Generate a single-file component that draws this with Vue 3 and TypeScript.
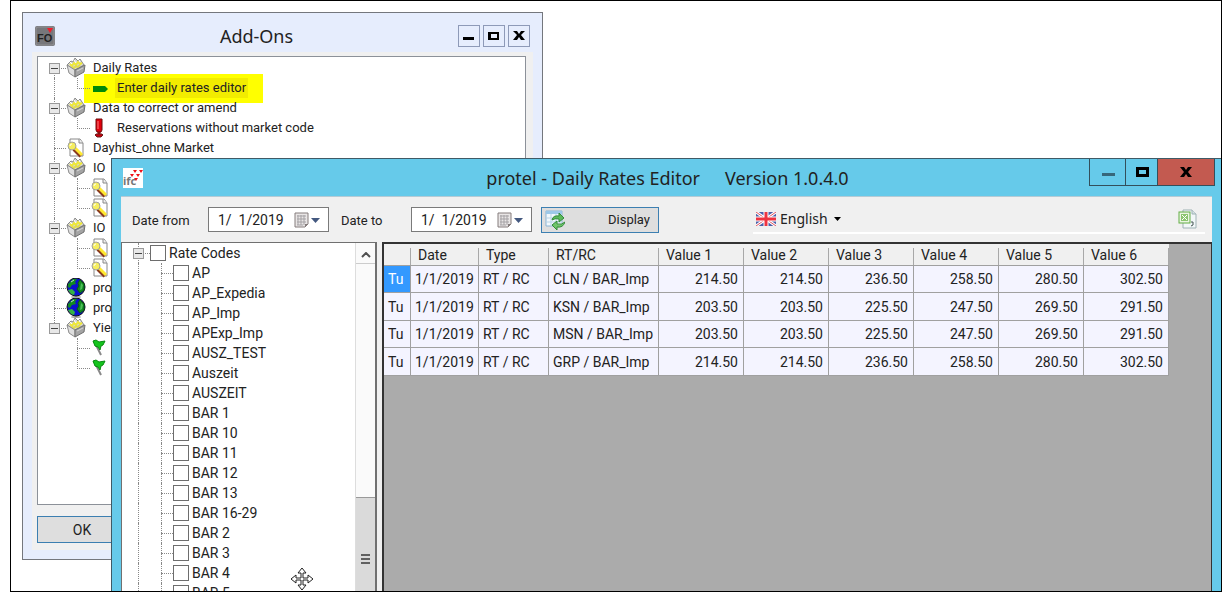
<script setup lang="ts">
interface AddOn {
  level: 0 | 1
  icon: string
  label: string
  group?: boolean
  edge?: 'first' | 'last'
  rootLine?: boolean
  active?: boolean
}

interface Rate {
  day: string
  date: string
  type: string
  code: string
  values: string[]
}

const addOns: AddOn[] = [
  { level: 0, icon: 'box', label: 'Daily Rates', group: true, edge: 'first' },
  { level: 1, icon: 'arrow', label: 'Enter daily rates editor', edge: 'last', rootLine: true, active: true },
  { level: 0, icon: 'box', label: 'Data to correct or amend', group: true },
  { level: 1, icon: 'alert', label: 'Reservations without market code', edge: 'last', rootLine: true },
  { level: 0, icon: 'search', label: 'Dayhist_ohne Market' },
  { level: 0, icon: 'box', label: 'IO', group: true },
  { level: 1, icon: 'search', label: '', rootLine: true },
  { level: 1, icon: 'search', label: '', edge: 'last', rootLine: true },
  { level: 0, icon: 'box', label: 'IO', group: true },
  { level: 1, icon: 'search', label: '', rootLine: true },
  { level: 1, icon: 'search', label: '', edge: 'last', rootLine: true },
  { level: 0, icon: 'globe', label: 'pro' },
  { level: 0, icon: 'globe', label: 'pro' },
  { level: 0, icon: 'box', label: 'Yie', group: true, edge: 'last' },
  { level: 1, icon: 'flag', label: '' },
  { level: 1, icon: 'flag', label: '', edge: 'last' },
]

const rateCodes: string[] = [
  'AP', 'AP_Expedia', 'AP_Imp', 'APExp_Imp', 'AUSZ_TEST', 'Auszeit', 'AUSZEIT',
  'BAR 1', 'BAR 10', 'BAR 11', 'BAR 12', 'BAR 13', 'BAR 16-29', 'BAR 2', 'BAR 3', 'BAR 4', 'BAR 5',
]

const high = ['214.50', '214.50', '236.50', '258.50', '280.50', '302.50']
const low = ['203.50', '203.50', '225.50', '247.50', '269.50', '291.50']
const rates: Rate[] = [
  { day: 'Tu', date: '1/1/2019', type: 'RT / RC', code: 'CLN / BAR_Imp', values: high },
  { day: 'Tu', date: '1/1/2019', type: 'RT / RC', code: 'KSN / BAR_Imp', values: low },
  { day: 'Tu', date: '1/1/2019', type: 'RT / RC', code: 'MSN / BAR_Imp', values: low },
  { day: 'Tu', date: '1/1/2019', type: 'RT / RC', code: 'GRP / BAR_Imp', values: high },
]

const dates = [
  { id: 'date-from', label: 'Date from' },
  { id: 'date-to', label: 'Date to' },
]
</script>

<template>
  <svg class="defs" aria-hidden="true">
    <symbol id="i-box" viewBox="0 0 20 20">
      <path d="M1 7 L5 3 L7 4 L9 0 L12 3 L14 1 L18 7 L9 12 Z" fill="#d9d9d4" stroke="#8a8a8a" stroke-width="1" />
      <path d="M4 6 L6 8 L8 5 L10 7 L12 4 L14 6 L16 5" fill="none" stroke="#efe936" stroke-width="2" />
      <path d="M6 9 L8 10 L10 8 L12 9 L14 7" fill="none" stroke="#e2dc4a" stroke-width="2" />
      <path d="M4 4 L6 6 M8 2 L10 5 M13 2 L14 4" stroke="#fff" stroke-width="1" />
      <path d="M1 7 L9 12 V19 L3 15 Z" fill="#dedede" stroke="#8c8c8c" stroke-width="1" />
      <path d="M9 12 L19 7 L18 14 L9 19 Z" fill="#a4a4a4" stroke="#707070" stroke-width="1" />
      <path d="M11 13 L17 10" stroke="#d6d6d6" stroke-width="1" />
    </symbol>
    <symbol id="i-arrow" viewBox="0 0 20 20">
      <path d="M3 8 H15 L18 11 L15 14 H3 Z" fill="#008a08" />
    </symbol>
    <symbol id="i-alert" viewBox="0 0 20 20">
      <path d="M6 1 H12 V12 L11 14 H7 L6 12 Z" fill="#e0000c" stroke="#6e0a0a" />
      <path d="M8 3 V11" stroke="#ff8080" stroke-width="1" />
      <path d="M9 14 V16" stroke="#8a1010" stroke-width="3" />
      <path d="M6 16 H12 L13 17 L11 19 H7 L5 17 Z" fill="#c8000c" stroke="#6a2020" stroke-width="1" />
    </symbol>
    <symbol id="i-search" viewBox="0 0 20 20">
      <path d="M4 1 H14 L17 5 V18 H4 Z" fill="#fff" stroke="#888" />
      <path d="M13 1 V5 H17" fill="#eee" stroke="#888" />
      <path d="M8 11 L15 18" stroke="#8a3b1e" stroke-width="4" />
      <path d="M9 10 L16 17" stroke="#ffe930" stroke-width="3" />
      <circle cx="6" cy="8" r="4" fill="#f5ee60" stroke="#a0a0a0" />
      <path d="M4 8 Q4 6 6 6" stroke="#fff" fill="none" />
    </symbol>
    <symbol id="i-globe" viewBox="0 0 20 20">
      <ellipse cx="10" cy="19" rx="5" ry="1" fill="#aaa" />
      <circle cx="10" cy="9" r="9" fill="#0a10d0" stroke="#111" stroke-width="1" />
      <path d="M2 6 L7 1 L11 1 L9 4 L10 6 L6 7 L4 10 L2 9 Z" fill="#128a22" />
      <path d="M14 2 L18 6 L18 12 L14 15 L11 11 L13 8 L12 5 Z" fill="#128a22" stroke="#065c10" />
      <path d="M15 5 L17 7 L16 11 L14 12 Z" fill="#4cc05a" />
      <path d="M2 12 L6 11 L9 14 L8 17 L5 16 Z" fill="#35b544" />
      <path d="M5 4 L8 2" stroke="#b8ecb8" />
    </symbol>
    <symbol id="i-flag" viewBox="0 0 20 20">
      <path d="M4 3 L11 17" stroke="#888" stroke-width="2" />
      <path d="M3 3 L6 2 L9 4 L15 3 L13 7 L11 8 L10 12 L8 9 L5 8 Z" fill="#14c41c" stroke="#078a10" stroke-width="1" />
    </symbol>
  </svg>

  <main class="page">
    <div class="desktop">
      <section class="window addons">
        <header class="addons-title">
          <svg class="logo" viewBox="0 0 20 20" aria-hidden="true">
            <rect width="20" height="20" rx="2" fill="#77777b" />
            <rect x="1" y="1" width="18" height="18" rx="2" fill="none" stroke="#929295" />
            <text x="2" y="16" class="logo-fo">FO</text>
            <path d="M12 2 H18 L15 7 Z" fill="#f01d2b" />
          </svg>
          <h1>Add-Ons</h1>
          <div class="frame-buttons">
            <button type="button" aria-label="Minimize"><svg viewBox="0 0 20 20"><path d="M4 11 H15 V14 H4 Z" /></svg></button>
            <button type="button" aria-label="Maximize"><svg viewBox="0 0 20 20"><path fill-rule="evenodd" d="M4 6 H15 V14 H4 Z M7 8 V12 H13 V8 Z" /></svg></button>
            <button type="button" aria-label="Close"><svg viewBox="0 0 20 20"><path d="M4 5 H8 L10 8 L12 5 H16 L12 9 L16 14 H12 L10 11 L8 14 H4 L8 9 Z" /></svg></button>
          </div>
        </header>
        <div class="addons-body">
          <ul class="tree addons-tree">
            <li v-for="(item, i) in addOns" :key="i" class="node" :class="{ active: item.active }">
              <template v-if="item.level === 0">
                <span class="guide root line across" :class="item.edge">
                  <span v-if="item.group" class="expander"></span>
                </span>
              </template>
              <template v-else>
                <span class="guide root" :class="{ line: item.rootLine }"></span>
                <span class="guide child line across" :class="item.edge"></span>
              </template>
              <svg class="icon" aria-hidden="true"><use :href="'#i-' + item.icon" /></svg>
              <span class="label">{{ item.label }}</span>
            </li>
          </ul>
          <button type="button" class="button ok">OK</button>
        </div>
      </section>

      <section class="window editor">
        <header class="editor-title">
          <svg class="logo" viewBox="0 0 20 20" aria-hidden="true">
            <rect width="20" height="20" fill="#fff" />
            <text x="0" y="17" class="logo-ifc">ifc</text>
            <path d="M10 2 H14 L12 5 Z M16 2 H20 L18 5 Z M7 6 H11 L9 9 Z M13 6 H17 L15 9 Z M11 10 H15 L13 13 Z" fill="#f01018" />
          </svg>
          <h2><span>protel - Daily Rates Editor</span><span>Version 1.0.4.0</span></h2>
          <div class="caption-buttons">
            <button type="button" class="min" aria-label="Minimize"><svg viewBox="0 0 20 20"><path d="M4 11 H17 V14 H4 Z" fill="#37677a" /></svg></button>
            <button type="button" class="max" aria-label="Maximize"><svg viewBox="0 0 20 20"><path fill-rule="evenodd" d="M4 5 H17 V15 H4 Z M7 8 V12 H14 V8 Z" /></svg></button>
            <button type="button" class="close" aria-label="Close"><svg viewBox="0 0 20 20"><path d="M4 5 H8 L10 8 L12 5 H16 L12 10 L16 15 H12 L10 12 L8 15 H4 L8 10 Z" /></svg></button>
          </div>
        </header>

        <div class="editor-body">
          <div class="toolbar">
            <div v-for="d in dates" :key="d.id" class="field" :class="d.id">
              <label :for="d.id">{{ d.label }}</label>
              <div class="date-box">
                <input :id="d.id" type="text" value="1/  1/2019" />
                <button type="button" aria-label="Open calendar">
                  <svg viewBox="0 0 26 16" width="26" height="16">
                    <path d="M1 1 H14 V12 L11 15 H1 Z" fill="#e9e6e6" stroke="#857d7d" />
                    <path d="M3 4 H12 M3 7 H12 M3 10 H12 M3 13 H9 M4 3 V13 M7 3 V13 M10 3 V13" stroke="#a5a2a5" fill="none" />
                    <path d="M11 15 V12 H14 Z" fill="#857d7d" />
                    <path d="M17 6 H26 L21.5 11 Z" fill="#43587f" />
                  </svg>
                </button>
              </div>
            </div>
            <button type="button" class="button display">
              <svg viewBox="0 0 20 20" width="20" height="20" aria-hidden="true">
                <path d="M1 1 H17 V16 H1 Z" fill="#f2f8fc" stroke="#8bb5d5" />
                <path d="M1 1 H17 V4 H1 Z" fill="#9cc8e8" />
                <path d="M1 8 H17 M1 12 H17 M6 4 V16 M11 4 V16" stroke="#b8d3e6" fill="none" />
                <path d="M7 10 Q8 5 14 6 V3 L19 8 L14 12 V9 Q10 8 7 10 Z" fill="#5cb95b" stroke="#338b3a" />
                <path d="M20 12 Q18 18 12 17 V20 L7 15 L12 11 V14 Q17 15 20 12 Z" fill="#6fc56a" stroke="#338b3a" />
              </svg>
              <span>Display</span>
            </button>
            <div class="strip">
              <svg viewBox="0 0 20 14" width="20" height="14" aria-hidden="true">
                <rect width="20" height="14" fill="#4b5fa8" />
                <path d="M0 0 L20 14 M20 0 L0 14" stroke="#fff" stroke-width="3" />
                <path d="M0 0 L20 14 M20 0 L0 14" stroke="#e25560" stroke-width="1" />
                <path d="M10 0 V14 M0 7 H20" stroke="#fff" stroke-width="5" />
                <path d="M10 0 V14 M0 7 H20" stroke="#ee3340" stroke-width="3" />
              </svg>
              <select aria-label="Language"><option>English</option></select>
              <svg class="caret" viewBox="0 0 7 4" width="7" height="4" aria-hidden="true"><path d="M0 0 H7 L3.5 4 Z" /></svg>
              <button type="button" class="export" aria-label="Export to Excel">
                <svg viewBox="0 0 20 20" width="20" height="20">
                  <path d="M5 1 H14 L18 5 V19 H5 Z" fill="#f2f7f8" stroke="#9fb2b5" />
                  <path d="M14 1 V5 H18" fill="#d6e2e5" stroke="#9fb2b5" />
                  <rect x="1" y="3" width="11" height="11" fill="#eaf5e2" stroke="#63ad45" stroke-width="1" />
                  <rect x="3" y="5" width="7" height="7" fill="#8cc570" />
                  <path d="M4 6 L9 11 M9 6 L4 11" stroke="#fff" stroke-width="1" />
                  <path d="M13 13 H15 V16 L13 17" fill="none" stroke="#455" />
                </svg>
              </button>
            </div>
          </div>

          <div class="panes">
            <div class="codes">
              <ul class="tree codes-tree">
                <li class="node">
                  <span class="guide root line across"><span class="expander"></span></span>
                  <label class="check"><input type="checkbox" />Rate Codes</label>
                </li>
                <li v-for="code in rateCodes" :key="code" class="node">
                  <span class="guide root line"></span>
                  <span class="guide child line across"></span>
                  <label class="check"><input type="checkbox" />{{ code }}</label>
                </li>
              </ul>
              <div class="scrollbar">
                <button type="button" aria-label="Scroll up"><svg viewBox="0 0 10 6" width="10" height="6"><path d="M1 5 L5 1 L9 5" fill="none" stroke="#505050" stroke-width="2" /></svg></button>
                <div class="track"></div>
                <div class="thumb"><svg viewBox="0 0 9 11" width="9" height="11"><path d="M0 1 H9 M0 5 H9 M0 9 H9" stroke="#606060" stroke-width="2" /></svg></div>
              </div>
            </div>

            <div class="grid">
              <table>
                <colgroup>
                  <col class="c-day" /><col class="c-date" /><col class="c-type" /><col class="c-code" />
                  <col v-for="n in 6" :key="n" class="c-value" />
                </colgroup>
                <thead>
                  <tr>
                    <th></th><th>Date</th><th>Type</th><th>RT/RC</th>
                    <th v-for="n in 6" :key="n">Value {{ n }}</th>
                  </tr>
                </thead>
                <tbody>
                  <tr v-for="(r, i) in rates" :key="r.code">
                    <td class="day" :class="{ selected: i === 0 }">{{ r.day }}</td>
                    <td>{{ r.date }}</td>
                    <td>{{ r.type }}</td>
                    <td>{{ r.code }}</td>
                    <td v-for="(v, k) in r.values" :key="k" class="num">{{ v }}</td>
                  </tr>
                </tbody>
              </table>
            </div>
          </div>
        </div>
      </section>

      <svg class="pointer" viewBox="0 0 24 24" aria-hidden="true">
        <path d="M12 1 L16 6 H13 V11 H18 V8 L23 12 L18 16 V13 H13 V18 H16 L12 23 L8 18 H11 V13 H6 V16 L1 12 L6 8 V11 H11 V6 H8 Z" fill="#fff" stroke="#222" />
      </svg>
    </div>
  </main>
</template>

<style>
body {
  background: #fff;
}
</style>

<style scoped>
* {
  box-sizing: border-box;
}

.defs {
  position: absolute;
  width: 0;
  height: 0;
}

.page {
  height: 100vh;
  padding: 0 8px 4px 10px;
  font: 14px/20px Roboto, "Liberation Sans", sans-serif;
  color: #222;
}

.desktop {
  position: relative;
  height: 100%;
  overflow: hidden;
  border: 1px solid #000;
  background: #fff;
}

button,
input,
select {
  font: inherit;
  color: inherit;
  margin: 0;
  padding: 0;
  border: 0;
  border-radius: 0;
  background: none;
}

h1,
h2 {
  margin: 0;
  font: 18px/24px "Noto Sans", "Open Sans", sans-serif;
  text-align: center;
  white-space: nowrap;
}

.window {
  position: absolute;
  display: flex;
  flex-direction: column;
}

.logo {
  width: 20px;
  height: 20px;
}

.logo-fo {
  font: bold 11px "Liberation Sans", sans-serif;
  fill: #222;
}

.logo-ifc {
  font: bold 11px "Noto Sans", sans-serif;
  fill: #777;
}

.addons {
  left: 11px;
  top: 11px;
  width: 521px;
  height: 548px;
  padding: 0 9px 9px;
  border: 1px solid #74777d;
  background: #e6edfd;
}

.addons-title {
  display: flex;
  align-items: center;
  height: 39px;
  padding: 6px 3px 0 3px;
}

.addons-title h1 {
  flex: 1;
}

.frame-buttons {
  display: flex;
  gap: 3px;
}

.frame-buttons button {
  width: 22px;
  height: 22px;
  border: 1px solid #8e9ab8;
}

.frame-buttons svg {
  display: block;
}

.addons-body {
  flex: 1;
  display: flex;
  flex-direction: column;
  gap: 11px;
  padding: 4px 7px 7px 5px;
  background: #f0f0f0;
}

.tree {
  position: relative;
  z-index: 0;
  flex: 1;
  margin: 0;
  padding: 0;
  list-style: none;
  background: #fff;
  overflow: hidden;
}

.addons-tree {
  padding-top: 1px;
  border: 1px solid #8c9199;
  font-size: 13px;
}

.node {
  position: relative;
  display: flex;
  height: 20px;
  white-space: nowrap;
}

.guide {
  --x: 16px;
  position: relative;
  flex: none;
  width: 28px;
  height: 20px;
}

.guide.child {
  --x: 11px;
  width: 24px;
}

.guide.line::before {
  content: "";
  position: absolute;
  left: var(--x);
  top: 0;
  bottom: 0;
  border-left: 1px dotted #888;
}

.guide.first::before {
  top: 10px;
}

.guide.last::before {
  bottom: 9px;
}

.guide.across::after {
  content: "";
  position: absolute;
  left: var(--x);
  right: 0;
  top: 10px;
  border-top: 1px dotted #888;
}

.expander {
  position: absolute;
  z-index: 1;
  left: calc(var(--x) - 5px);
  top: 5px;
  width: 11px;
  height: 11px;
  border: 1px solid #999;
  background: linear-gradient(#444, #444) center / 7px 1px no-repeat #e8e8e8;
}

.icon {
  flex: none;
  width: 20px;
  height: 20px;
}

.addons-tree .label {
  margin-left: 5px;
  padding: 0 2px;
}

.active::before {
  content: "";
  position: absolute;
  z-index: -1;
  left: 46px;
  top: -4px;
  width: 179px;
  height: 29px;
  background: #ff0;
}

.active .label {
  background: #f2ec00;
}

.button {
  border: 1px solid #3c7fb1;
  background: #dedede;
}

.ok {
  width: 90px;
  height: 27px;
}

.editor {
  left: 100px;
  top: 157px;
  right: 0;
  bottom: 0;
  padding: 0 9px;
  border: solid #3f5a66;
  border-width: 1px 0 0 1px;
  background: #66caea;
}

.editor-title {
  display: grid;
  grid-template-columns: 1fr auto 1fr;
  align-items: center;
  height: 37px;
  padding-left: 2px;
}

.editor-title h2 span + span {
  margin-left: 25px;
}

.caption-buttons {
  display: flex;
  justify-self: end;
  align-self: start;
  margin-right: -3px;
  border: solid #334f5b;
  border-width: 0 1px 1px;
}

.caption-buttons button {
  display: flex;
  align-items: center;
  justify-content: center;
  height: 26px;
}

.caption-buttons svg {
  width: 20px;
  height: 20px;
}

.min {
  width: 35px;
}

.caption-buttons .max {
  width: 33px;
  border: solid #334f5b;
  border-width: 0 1px;
}

.caption-buttons .close {
  width: 56px;
  background: #c35a50;
}

.editor-body {
  flex: 1;
  display: flex;
  flex-direction: column;
  min-height: 0;
  background: #f0f0f0;
}

.toolbar {
  display: flex;
  align-items: center;
  height: 46px;
  padding: 0 7px 0 11px;
  border-top: 1px solid #b4cbd6;
}

.field {
  display: flex;
  align-items: center;
}

.field label {
  width: 76px;
  padding-top: 3px;
  font-size: 13px;
}

.date-to {
  margin-left: 12px;
}

.date-to label {
  width: 70px;
}

.date-box {
  display: flex;
  align-items: center;
  width: 121px;
  height: 25px;
  padding: 0 8px 0 9px;
  border: 1px solid #7a7a7a;
  background: #fff;
}

.date-box input {
  flex: 1;
  min-width: 0;
  white-space: pre;
}

.date-box svg {
  display: block;
}

.display {
  display: flex;
  align-items: center;
  justify-content: space-between;
  width: 118px;
  height: 26px;
  margin-left: 9px;
  padding: 0 8px 0 3px;
  font-size: 13px;
}

.strip {
  flex: 1;
  display: flex;
  align-items: center;
  height: 28px;
  margin-left: 94px;
  padding: 0 7px 0 3px;
  border-bottom: 2px solid #fff;
}

.strip select {
  appearance: none;
  margin-left: 4px;
  font-family: "Noto Sans", "Open Sans", sans-serif;
}

.caret {
  margin-left: 6px;
}

.export {
  margin-left: auto;
}

.export svg {
  display: block;
}

.panes {
  flex: 1;
  display: flex;
  gap: 5px;
  min-height: 0;
}

.codes {
  display: flex;
  width: 256px;
  border: solid #707070;
  border-width: 1px 2px 0 1px;
  overflow: hidden;
}

.codes-tree .guide.child {
  width: 23px;
}

.check {
  display: flex;
  align-items: center;
  gap: 3px;
}

.check input {
  appearance: none;
  width: 16px;
  height: 16px;
  border: 1px solid #6d6d6d;
  background: #fff;
}

.scrollbar {
  display: flex;
  flex-direction: column;
  width: 20px;
  background: #fafafa;
  border-left: 1px solid #ddd;
}

.scrollbar button {
  height: 21px;
  border-bottom: 1px solid #ccc;
}

.track {
  flex: 1;
}

.thumb {
  flex: 0 0 27%;
  padding-top: 52px;
  border-top: 1px solid #999;
  background: #dadada;
  text-align: center;
}

.grid {
  flex: 1;
  border: solid #333;
  border-width: 2px 1px 0 2px;
  background: #ababab;
}

table {
  table-layout: fixed;
  width: 785px;
  border-spacing: 0;
}

.c-day {
  width: 27px;
}

.c-date {
  width: 68px;
}

.c-type {
  width: 70px;
}

.c-code {
  width: 110px;
}

.c-value {
  width: 85px;
}

th,
td {
  padding: 0 4px;
  white-space: nowrap;
}

th {
  height: 22px;
  padding-left: 7px;
  border-bottom: 1px solid #a0a0a0;
  background: linear-gradient(#a8a8a8, #a8a8a8) right bottom / 1px 17px no-repeat #f0f0f0;
  font-weight: normal;
  text-align: left;
}

td {
  height: 27px;
  border: solid #a0a0a0;
  border-width: 0 1px 1px 0;
  background: #f4f4ff;
}

tr:nth-child(even) td {
  height: 28px;
}

.num {
  padding-right: 5px;
  text-align: right;
}

.day.selected {
  background: #3399ff;
  color: #fff;
}

.pointer {
  position: absolute;
  left: 279px;
  top: 566px;
  width: 24px;
  height: 24px;
}
</style>
